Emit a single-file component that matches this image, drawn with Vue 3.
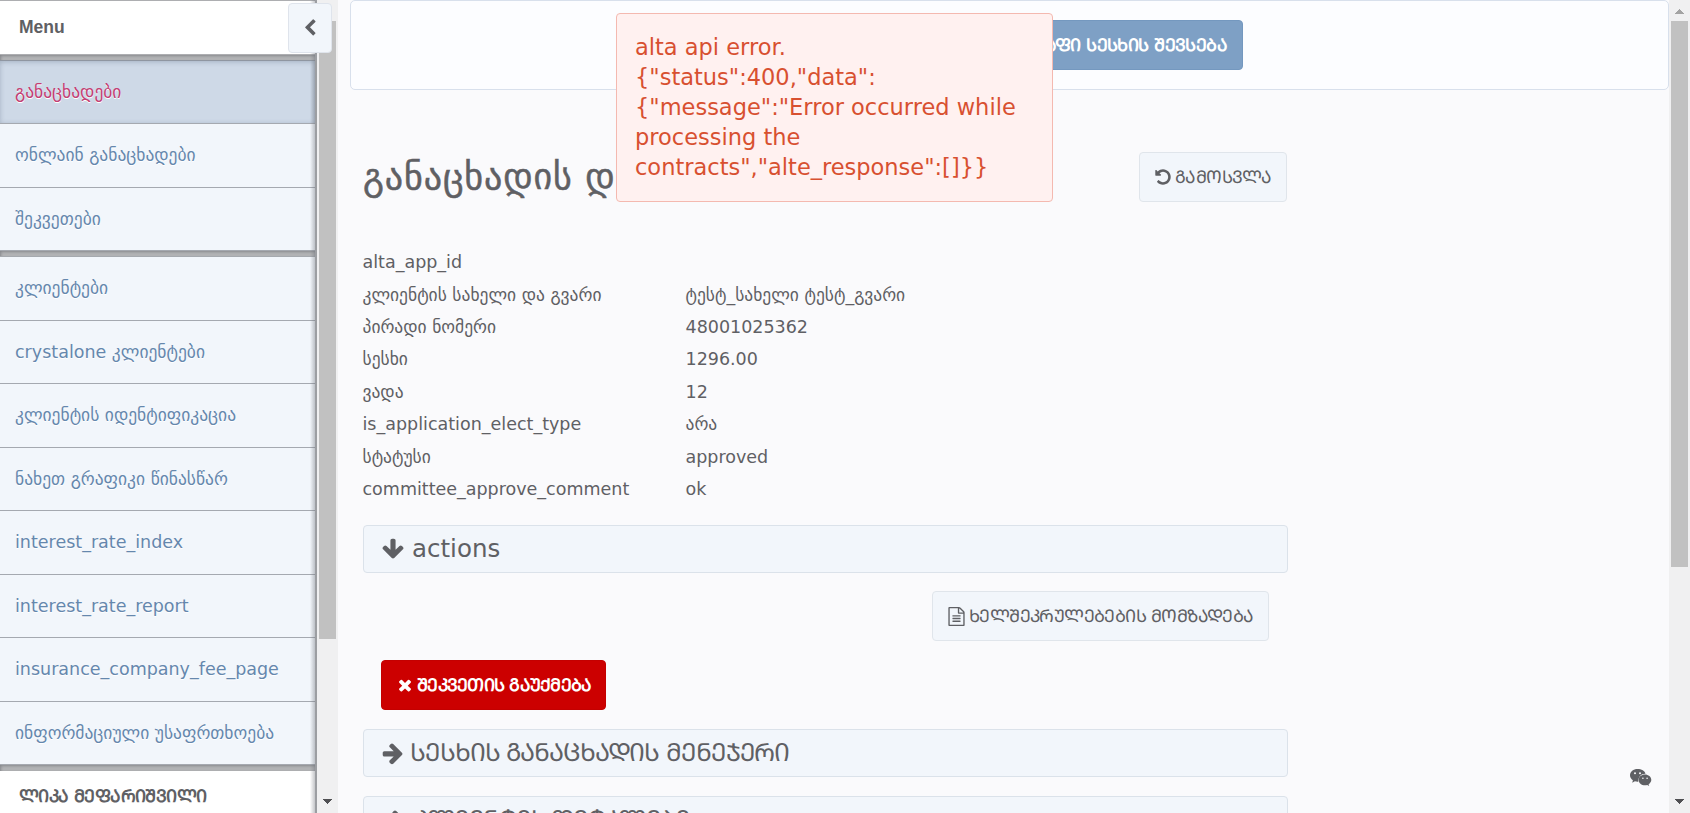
<script setup>
const icons = {
  left: 'M1427 301l-531 531 531 531q19 19 19 45t-19 45l-166 166q-19 19-45 19t-45-19l-742-742q-19-19-19-45t19-45l742-742q19-19 45-19t45 19l166 166q19 19 19 45t-19 45z',
  undo: 'M1664 896q0 156-61 298t-164 245-245 164-298 61q-172 0-327-72.5t-264-204.5q-7-10-6.5-22.5t8.5-20.5l137-138q10-9 25-9 16 2 23 12 73 95 179 147t225 52q104 0 198.5-40.5t163.5-109.5 109.5-163.5 40.5-198.5-40.5-198.5-109.5-163.5-163.5-109.5-198.5-40.5q-98 0-188 35.5t-160 101.5l137 138q31 30 14 69-17 40-59 40h-448q-26 0-45-19t-19-45v-448q0-42 40-59 39-17 69 14l130 129q107-101 244.5-156.5t284.5-55.5q156 0 298 61t245 164 164 245 61 298z',
  right: 'M1600 960q0 54-37 91l-651 651q-39 37-91 37-51 0-90-37l-75-75q-38-38-38-91t38-91l293-293h-704q-52 0-84.5-37.5t-32.5-90.5v-128q0-53 32.5-90.5t84.5-37.5h704l-293-294q-38-36-38-90t38-90l75-75q38-38 90-38 53 0 91 38l651 651q37 35 37 90z',
  down: 'M1675 832q0 53-37 90l-651 652q-39 37-91 37-53 0-90-37l-651-652q-38-36-38-90 0-53 38-91l74-75q39-37 91-37 53 0 90 37l294 294v-704q0-52 38-90t90-38h128q52 0 90 38t38 90v704l294-294q37-37 90-37 52 0 91 37l75 75q37 39 37 91z',
  times: 'M1490 1322q0 40-28 68l-136 136q-28 28-68 28t-68-28l-294-294-294 294q-28 28-68 28t-68-28l-136-136q-28-28-28-68t28-68l294-294-294-294q-28-28-28-68t28-68l136-136q28-28 68-28t68 28l294 294 294-294q28-28 68-28t68 28l136 136q28 28 28 68t-28 68l-294 294 294 294q28 28 28 68z',
  file: 'M1596 380q28 28 48 76t20 88v1152q0 40-28 68t-68 28h-1344q-40 0-68-28t-28-68v-1600q0-40 28-68t68-28h896q40 0 88 20t76 48zm-444-244v376h376q-10-29-22-41l-313-313q-12-12-41-22zm384 1528v-1024h-416q-40 0-68-28t-28-68v-416h-768v1536h1280zm-1024-864q0-14 9-23t23-9h704q14 0 23 9t9 23v64q0 14-9 23t-23 9h-704q-14 0-23-9t-9-23v-64zm736 224q14 0 23 9t9 23v64q0 14-9 23t-23 9h-704q-14 0-23-9t-9-23v-64q0-14 9-23t23-9h704zm0 256q14 0 23 9t9 23v64q0 14-9 23t-23 9h-704q-14 0-23-9t-9-23v-64q0-14 9-23t23-9h704z',
}

// Georgian Mkhedruli letters to their Mtavruli capitals.
const caps = (text) =>
  text.replace(/[\u10d0-\u10f0]/g, (c) => String.fromCharCode(c.charCodeAt(0) + 0xbc0))

const applications = ['განაცხადები', 'ონლაინ განაცხადები', 'შეკვეთები']
const clients = [
  'კლიენტები',
  'crystalone კლიენტები',
  'კლიენტის იდენტიფიკაცია',
  'ნახეთ გრაფიკი წინასწარ',
  'interest_rate_index',
  'interest_rate_report',
  'insurance_company_fee_page',
  'ინფორმაციული უსაფრთხოება',
]
const details = [
  ['alta_app_id', ''],
  ['კლიენტის სახელი და გვარი', 'ტესტ_სახელი ტესტ_გვარი'],
  ['პირადი ნომერი', '48001025362'],
  ['სესხი', '1296.00'],
  ['ვადა', '12'],
  ['is_application_elect_type', 'არა'],
  ['სტატუსი', 'approved'],
  ['committee_approve_comment', 'ok'],
]
</script>

<template>
  <div class="app">
    <aside class="sidebar">
      <div class="menu">
        <div class="heading first"><span class="menu-title">Menu</span></div>
        <div class="band"></div>
        <nav class="group one">
          <a v-for="(item, i) in applications" :key="item" class="item" :class="{ active: i === 0 }">{{ item }}</a>
        </nav>
        <div class="band"></div>
        <nav class="group two">
          <a v-for="item in clients" :key="item" class="item">{{ item }}</a>
        </nav>
        <div class="band"></div>
        <div class="heading user"><span class="caps user-name">{{ caps('ლიკა მეფარიშვილი') }}</span></div>
      </div>
      <div class="track side">
        <div class="thumb"></div>
        <svg class="arrow" width="9" height="5" viewBox="0 0 9 5" shape-rendering="crispEdges"><path d="M0 0h9L4.500 5z" fill="#4f4f52" /></svg>
      </div>
      <button class="toggle">
        <svg width="18" height="18" viewBox="0 0 1792 1792"><path :d="icons.left" /></svg>
      </button>
    </aside>

    <main class="main">
      <header class="topbar">
        <button class="btn primary"><span class="caps fill">{{ caps('სწრაფი სესხის შევსება') }}</span></button>
      </header>

      <div class="content">
        <div class="title-row">
          <h1 class="title">განაცხადის დეტალები</h1>
          <button class="btn exit">
            <svg width="18" height="18" viewBox="0 0 1792 1792"><path :d="icons.undo" /></svg>
            <span class="caps">{{ caps('გამოსვლა') }}</span>
          </button>
        </div>

        <dl class="details">
          <template v-for="row in details" :key="row[0]">
            <dt>{{ row[0] }}</dt>
            <dd>{{ row[1] }}</dd>
          </template>
        </dl>

        <section class="bar">
          <svg width="24" height="24" viewBox="0 0 1792 1792"><path :d="icons.down" /></svg>
          <span class="actions-text">actions</span>
        </section>

        <div class="actions">
          <button class="btn contract">
            <svg width="19" height="19" viewBox="0 0 1792 1792"><path :d="icons.file" /></svg>
            <span class="caps">{{ caps('ხელშეკრულებების მომზადება') }}</span>
          </button>
          <button class="btn danger">
            <svg width="18" height="18" viewBox="0 0 1792 1792"><path :d="icons.times" /></svg>
            <span class="caps">{{ caps('შეკვეთის გაუქმება') }}</span>
          </button>
        </div>

        <section class="bar">
          <svg width="24" height="24" viewBox="0 0 1792 1792"><path :d="icons.right" /></svg>
          <span class="caps bar-text">{{ caps('სესხის განაცხადის მენეჯერი') }}</span>
        </section>
        <section class="bar client">
          <svg width="24" height="24" viewBox="0 0 1792 1792"><path :d="icons.right" /></svg>
          <span class="caps bar-text">{{ caps('კლიენტის დეტალები') }}</span>
        </section>
      </div>
    </main>

    <div class="track page-track">
      <svg class="arrow top" width="9" height="5" viewBox="0 0 9 5" shape-rendering="crispEdges"><path d="M0 5h9L4.500 0z" fill="#a3a3a3" /></svg>
      <div class="thumb"></div>
      <svg class="arrow" width="9" height="5" viewBox="0 0 9 5" shape-rendering="crispEdges"><path d="M0 0h9L4.500 5z" fill="#4f4f52" /></svg>
    </div>

    <svg class="chat" width="22" height="18" viewBox="0 0 22 18">
      <path fill="#5f6064" d="M7.500 0C3.400 0 0 2.700 0 6.300c0 2.100 1.100 3.800 2.900 5L2.200 13.700l2.700-1.400c1 .2 1.700.4 2.600.4h.8C8 8 11 4.700 15.200 4.700h.3C14.900 1.900 11.500 0 7.500 0z" />
      <path fill="#5f6064" d="M21.300 10.900c0-3-3-5.400-6.300-5.400-3.600 0-6.400 2.400-6.400 5.400s2.800 5.400 6.400 5.400c.7 0 1.500-.2 2.200-.4l2 1.200-.6-1.900c1.500-1.100 2.700-2.600 2.700-4.300z" />
      <g fill="#fafafc"><circle cx="5" cy="4.200" r="1" /><circle cx="10" cy="4.200" r="1" /><circle cx="12.900" cy="9.200" r=".8" /><circle cx="17.100" cy="9.200" r=".8" /></g>
    </svg>

    <div class="notify">alta api error.<br />{"status":400,"data":<br />{"message":"Error occurred while processing the contracts","alte_response":[]}}</div>
  </div>
</template>

<style>
html,
body {
  overflow: hidden;
}
</style>

<style scoped>
.app {
  position: relative;
  display: flex;
  width: 1690px;
  height: 813px;
  overflow: hidden;
  background: #fafafc;
  color: #5f6064;
  font-family: "DejaVu Sans", sans-serif;
  font-size: 17.5px;
}
.app * {
  box-sizing: border-box;
}
svg {
  fill: currentColor;
  flex: none;
  display: block;
}
.caps {
  letter-spacing: -0.6px;
  white-space: nowrap;
}

.sidebar {
  position: relative;
  display: flex;
  width: 338px;
  height: 813px;
  flex: none;
}
.menu {
  position: relative;
  width: 317px;
  overflow: hidden;
  border-right: 2px solid #9c9ea2;
  background: #f2f6fb;
}
.menu::after {
  content: "";
  position: absolute;
  top: 0;
  right: 0;
  bottom: 0;
  width: 5px;
  background: linear-gradient(to right, rgba(110, 114, 122, 0), rgba(110, 114, 122, 0.4));
}
.heading {
  display: flex;
  align-items: center;
  padding-left: 19px;
  background: #fff;
  font-weight: 700;
}
.heading.first {
  height: 55px;
  border-top: 1px solid #adaeb1;
  border-bottom: 1px solid #adaeb1;
}
.menu-title {
  font-family: "Liberation Sans", sans-serif;
}
.heading.user {
  height: 60px;
  padding-bottom: 12px;
}
.band {
  height: 6px;
  background: #b4b5b7;
  box-shadow: inset 1px 1px 3px rgba(90, 92, 98, 0.5);
}
.group {
  margin-top: -1px;
  border-top: 1px solid #8f96a1;
}
.group.two {
  border-top-color: #a5a9ae;
}
.item {
  display: flex;
  align-items: center;
  height: 63px;
  padding-left: 15px;
  border-bottom: 1px solid #a5a9b0;
  color: #6587ad;
  text-shadow: 0 1px 0 #fff;
  white-space: nowrap;
}
.one .item:nth-child(even),
.two .item:nth-child(odd) {
  height: 64px;
  padding-bottom: 2px;
}
.item.active {
  background: #ced9e7;
  color: #c43d72;
  box-shadow: inset 0 1px 5px rgba(70, 85, 110, 0.3);
}
.track {
  position: relative;
  width: 21px;
  height: 813px;
  background: #f0f0f1;
}
.thumb {
  width: 17px;
  margin-left: 2px;
  background: #c1c1c1;
}
.side .thumb {
  height: 618px;
  margin-top: 21px;
}
.page-track {
  flex: none;
}
.page-track .thumb {
  height: 546px;
  margin-top: 21px;
}
.arrow {
  position: absolute;
  left: 6px;
  bottom: 9px;
}
.arrow.top {
  top: 9px;
  bottom: auto;
}
.toggle {
  position: absolute;
  left: 288px;
  top: 3px;
  display: flex;
  align-items: center;
  justify-content: center;
  width: 44px;
  height: 50px;
  padding: 0;
  border: 1px solid #dfe4ec;
  border-radius: 4px;
  background: #f2f6fb;
  color: #5f6064;
}

.main {
  display: flow-root;
  width: 1331px;
  flex: none;
}
.topbar {
  display: flex;
  justify-content: flex-end;
  height: 90px;
  margin-left: 12px;
  padding: 19px 425px 0 0;
  border: 1px solid #d8e0ec;
  border-radius: 5px;
  background: #fcfdff;
}
.btn {
  display: flex;
  align-items: center;
  height: 50px;
  padding: 0 14px;
  gap: 3px;
  border: 1px solid #e0e5eb;
  border-radius: 4px;
  background: #f2f6fb;
  color: #5f6064;
  font-family: "DejaVu Sans", sans-serif;
  font-size: 17.5px;
  white-space: nowrap;
}
.btn .caps {
  padding-bottom: 2px;
}
.btn.primary {
  padding: 0 15px;
  border-color: #7498bf;
  background: #7ea0c5;
  color: #fff;
  font-weight: 700;
}
.content {
  width: 925px;
  margin-left: 25px;
}
.title-row {
  display: flex;
  align-items: flex-start;
  justify-content: space-between;
  height: 155px;
  padding-top: 62px;
}
.title {
  margin: 0;
  font-size: 36px;
  font-weight: 400;
  line-height: 50px;
  letter-spacing: 0.9px;
  -webkit-text-stroke: 0.5px #5f6064;
  white-space: nowrap;
}
.exit {
  width: 148px;
  margin-right: 1px;
}
.details {
  display: grid;
  grid-template-columns: 323px 1fr;
  grid-auto-rows: 32.4px;
  align-items: center;
  margin: 0 0 0 -0.5px;
  padding-top: 1px;
  height: 280px;
  white-space: nowrap;
}
.details dd {
  margin: 0;
}
.bar {
  display: flex;
  align-items: center;
  height: 48px;
  padding-left: 17px;
  gap: 7px;
  border: 1px solid #dbe2ea;
  border-radius: 4px;
  background: #f2f6fb;
}
.actions-text {
  padding-bottom: 2px;
  font-size: 24.5px;
}
.bar-text {
  margin-left: -2px;
  padding-bottom: 4px;
  font-size: 25px;
  letter-spacing: -1.1px;
}
.actions {
  display: flex;
  flex-direction: column;
  gap: 19px;
  height: 156px;
  padding: 18px 19px 0 18px;
}
.contract {
  align-self: flex-end;
  width: 337px;
}
.danger {
  align-self: flex-start;
  width: 225px;
  border-color: #c40000;
  background: #cc0000;
  color: #fff;
  font-weight: 700;
}
.danger .caps {
  letter-spacing: -0.75px;
}
.bar.client {
  margin-top: 19px;
  padding-left: 20px;
}
.client .bar-text {
  letter-spacing: -1.5px;
}
.chat {
  position: absolute;
  left: 1630px;
  top: 769px;
}
.notify {
  position: absolute;
  left: 616px;
  top: 13px;
  width: 437px;
  height: 189px;
  padding: 18px;
  border: 1px solid #f4b9b0;
  border-radius: 4px;
  background: #fff1f0;
  color: #d85030;
  font-size: 22.5px;
  line-height: 30px;
}
</style>
